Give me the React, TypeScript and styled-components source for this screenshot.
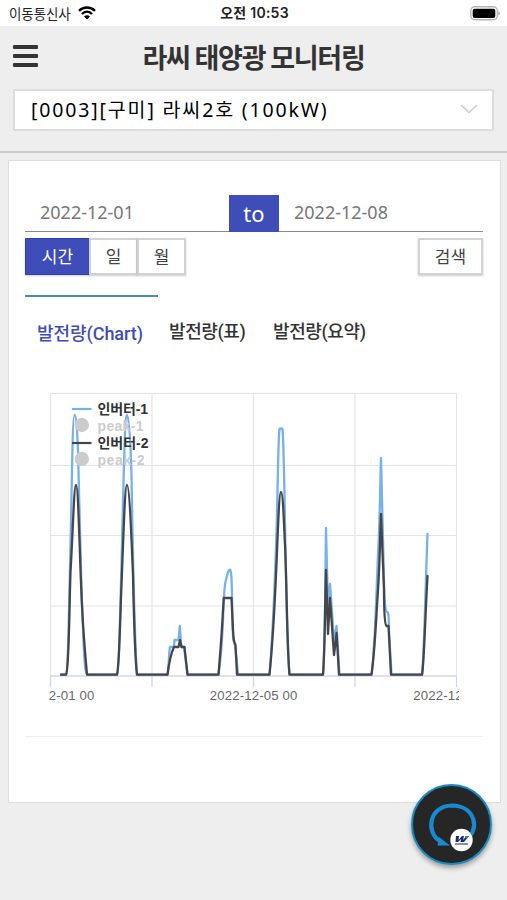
import React from "react";
import styled, { createGlobalStyle } from "styled-components";

const GlobalStyle = createGlobalStyle`
  * { box-sizing: border-box; }
  body { margin: 0; background: #eee; overflow: hidden; }
  button { font: inherit; margin: 0; padding: 0; border: 0; background: none; }
`;

const sans = `"Noto Sans", "Noto Sans CJK KR", sans-serif`;
const kr = `"Noto Sans CJK KR", sans-serif`;

const Screen = styled.div`
  position: relative;
  width: 507px;
  height: 900px;
  background: #eee;
  font-family: ${kr};
  color: #333;
  white-space: nowrap;
`;

const StatusBar = styled.div`
  display: grid;
  grid-template-columns: 1fr auto 1fr;
  align-items: center;
  height: 26px;
  padding: 0 7px 0 9px;
  background: #fff;
  color: #222;
  font-size: 13.5px;
  line-height: 26px;
`;

const Carrier = styled.div`
  display: flex;
  align-items: center;
  gap: 6px;
  letter-spacing: -0.1px;
`;

const CarrierName = styled.span`
  width: 63px;
`;

const Clock = styled.div`
  font-family: Inter, "Noto Sans CJK KR", sans-serif;
  font-weight: 600;
  font-size: 14px;
  letter-spacing: 0.25px;
`;

const Battery = styled.svg`
  justify-self: end;
  display: block;
`;

const Header = styled.header`
  height: 127px;
  border-bottom: 2px solid #ccc;
  padding: 0 13px;
`;

const TitleRow = styled.div`
  display: grid;
  grid-template-columns: 26px 1fr 26px;
  align-items: center;
  height: 63px;
  padding-bottom: 3px;
`;

const MenuButton = styled.button`
  display: grid;
  gap: 5px;
  width: 25px;
`;

const MenuBar = styled.span`
  height: 4px;
  border-radius: 1px;
  background: #333;
`;

const Title = styled.h1`
  margin: 0;
  padding-top: 2px;
  text-align: center;
  font-size: 27px;
  line-height: 36px;
  font-weight: 600;
  letter-spacing: -1.25px;
`;

const SiteSelect = styled.div`
  display: flex;
  align-items: center;
  justify-content: space-between;
  height: 42px;
  padding: 0 14px 3px 16px;
  border: 2px solid #ddd;
  background: #fff;
  color: #000;
  font-family: ${sans};
  font-size: 19.5px;
  letter-spacing: 1.85px;
`;

const Card = styled.main`
  width: 493px;
  height: 643px;
  margin: 7px 0 0 8px;
  padding: 34px 17px 0 16px;
  border: 1px solid #ddd;
  background: #fff;
`;

const DateRow = styled.div`
  display: grid;
  grid-template-columns: 204px 50px 1fr;
  width: 458px;
  height: 37px;
  border-bottom: 1px solid #888;
`;

const DateField = styled.div`
  padding: 0 15px;
  color: #777;
  font-family: ${sans};
  font-size: 18px;
  line-height: 34px;
`;

const DateJoin = styled.div`
  height: 37px;
  background: #3f4db8;
  color: #fff;
  text-align: center;
  font-family: ${sans};
  font-size: 22px;
  line-height: 37px;
`;

const Toolbar = styled.div`
  display: flex;
  justify-content: space-between;
  width: 458px;
  margin-top: 6px;
`;

const ButtonGroup = styled.div`
  display: flex;
`;

const Button = styled.button<{ $width: number; $active?: boolean }>`
  width: ${(p) => p.$width}px;
  height: 37px;
  border: ${(p) => (p.$active ? "1px solid #3440a5" : "2px solid #d2d2d2")};
  background: ${(p) => (p.$active ? "#3f4db8" : "#fff")};
  color: ${(p) => (p.$active ? "#fff" : "#444")};
  box-shadow: 0 1px 2px rgba(0, 0, 0, 0.2);
  padding-bottom: 2px;
  font-size: 17px;
  line-height: 30px;
  & + & { margin-left: -1px; }
`;

const Tabs = styled.nav`
  display: flex;
  margin-top: 20px;
  height: 59px;
`;

const Tab = styled.div<{ $width: number; $active?: boolean }>`
  width: ${(p) => p.$width}px;
  padding: ${(p) => (p.$active ? "25px 0 0 12px" : "25px 0 0 11px")};
  border-top: ${(p) => (p.$active ? "2.5px solid #438fb9" : "0 solid transparent")};
  color: ${(p) => (p.$active ? "#3f4db8" : "#333")};
  font-family: Roboto, "Noto Sans CJK KR", sans-serif;
  font-size: 18px;
  line-height: 24px;
  font-weight: 500;
  letter-spacing: ${(p) => (p.$active ? "-0.05px" : "-0.4px")};
`;

const ChartPanel = styled.section`
  width: 458px;
  height: 383px;
  border-bottom: 1px solid #eee;
  padding: 31px 0 0 24px;
`;

const Chart = styled.svg`
  display: block;
  font-family: "Liberation Sans", "Noto Sans CJK KR", sans-serif;
`;

const FloatingButton = styled.button`
  position: absolute;
  left: 411px;
  top: 784px;
  width: 81px;
  height: 81px;
  border-radius: 50%;
  border: 2px solid #198bc4;
  background: #262626;
  box-shadow: 0 3px 5px rgba(0, 0, 0, 0.35);
`;

const verticals = [50.5, 152, 253.5, 355, 456.5];
const horizontals = [393.5, 465.5, 535.5, 606, 676];

const inverter1 =
  "M61 674.7H66C68 674 69 610 70.5 545C72 480 72.5 415 74.5 415C76 415 77 427 78 450C80 530 81.5 600 83 628C84 655 85 674.7 87 674.7H117C119 674 120.5 600 122 545C124 460 125 415 127 415C129 415 130.5 440 131.5 475C133 560 134 630 137 674.7H167.5C169 665 169 650 170 647H174L174.5 640H178.5L179.8 626L181.3 647H184L187.5 674.7H218.5C222 650 222 638 223 620C224 595 224 585 226 580C228 571 230.5 563 231.5 578C232.5 600 232 630 233.5 641C235 642 236 651 238 674.7H269.5C272 645 274 605 276 548C278 490 278 440 279.5 429Q281 428 282.5 429C284 440 285 535 286 575C287 630 288 655 289.5 674.7H323C325 650 325 600 326 528L328 610L330 584L334 640L336.6 626L339.5 674.7H371.5C375 650 376 600 378 555C380 520 380 490 381 458L384 580Q384.5 612 387 612Q389 611 389 630L391.5 674.7H422C424 660 425 600 427.5 534";
const inverter2 =
  "M61 674.7H66C69 670 69 620 70.5 572C73 530 74 485 76 485C78 485 79 530 81 583C82.5 626 84 640 87 674.7H117C119.5 665 120 620 121.5 585C124 520 125 485 127 485C129 485 131 525 133 575C134 625 135 659 137 674.7H167.5Q170 655 174 647H178.5L180 640L181.5 647H184.5L187.5 674.7H218.5C220 655 221.5 640 223 610L223.8 598H231.5L233 630Q233.5 642 235.5 645L237 674.7H269.5C272 650 274 620 276 575C278 530 279 492 281 492C283 492 284 525 285 545C287 590 287 650 289.5 674.7H323C325 650 325 600 326 570L328 634L330 598L334 655L336.6 633L339 674.7H371.5C375 650 376 620 378 590C380 560 380 535 381 514L384 590Q384 624 386.5 626H388.5L391 674.7H422C424 665 425 620 427.5 576";

const App = () => (
  <Screen>
    <GlobalStyle />
    <StatusBar>
      <Carrier>
        <CarrierName>이동통신사</CarrierName>
        <svg width="18" height="14" viewBox="0 0 18 14">
          <g fill="none" stroke="#000" strokeWidth="2.4">
            <path d="M1 4.8C5.5 .4 12.5 .4 17 4.8" />
            <path d="M4 8C7 5 11 5 14 8" />
          </g>
          <path d="M9 13.5L6 10.5Q9 8 12 10.5Z" />
        </svg>
      </Carrier>
      <Clock>오전 10:53</Clock>
      <Battery width="30" height="15" viewBox="0 0 30 15">
        <rect x="0.8" y="0.8" width="26.5" height="13" rx="4" fill="#fff" stroke="#b5b5b5" strokeWidth="1.4" />
        <rect x="2.7" y="2.7" width="22.6" height="9.3" rx="2" />
        <path d="M28.4 5.2Q30 5.5 30 7.2T28.4 9.5Z" fill="#aaa" />
      </Battery>
    </StatusBar>

    <Header>
      <TitleRow>
        <MenuButton aria-label="메뉴">
          <MenuBar />
          <MenuBar />
          <MenuBar />
        </MenuButton>
        <Title>라씨 태양광 모니터링</Title>
      </TitleRow>
      <SiteSelect>
        <span>[0003][구미] 라씨2호 (100kW)</span>
        <svg width="18" height="10" viewBox="0 0 18 10" fill="none" stroke="#ccc" strokeWidth="1.6">
          <path d="M1 1L9 8.5L17 1" />
        </svg>
      </SiteSelect>
    </Header>

    <Card>
      <DateRow>
        <DateField>2022-12-01</DateField>
        <DateJoin>to</DateJoin>
        <DateField>2022-12-08</DateField>
      </DateRow>
      <Toolbar>
        <ButtonGroup>
          <Button $width={65} $active>시간</Button>
          <Button $width={49}>일</Button>
          <Button $width={49}>월</Button>
        </ButtonGroup>
        <Button $width={65}>검색</Button>
      </Toolbar>
      <Tabs>
        <Tab $width={133} $active>발전량(Chart)</Tab>
        <Tab $width={104}>발전량(표)</Tab>
        <Tab $width={120}>발전량(요약)</Tab>
      </Tabs>
      <ChartPanel>
        <Chart width="410" height="324" viewBox="49 385 410 324">
          <g stroke="#e4e4e6" strokeWidth="1.2">
            {horizontals.map((y) => <path key={y} d={`M50 ${y}H457`} />)}
            {verticals.map((x) => <path key={x} d={`M${x} 393V676`} />)}
          </g>
          <g stroke="#ccd3ea" strokeWidth="1.2">
            <path d="M50 676H457" />
            {verticals.map((x) => <path key={x} d={`M${x} 676V687`} />)}
          </g>
          <g fill="none" strokeWidth="2.3" strokeLinejoin="round" strokeLinecap="round">
            <path stroke="#76b2e9" d={inverter1} />
            <path stroke="#45464c" d={inverter2} />
          </g>
          <g strokeWidth="2.2">
            <path stroke="#76b2e9" d="M72 409H91.5" />
            <path stroke="#45464c" d="M72 443H91.5" />
          </g>
          <g fill="#ccc">
            <circle cx="81.8" cy="425" r="7.2" />
            <circle cx="81.8" cy="459" r="7.2" />
          </g>
          <g fontSize="14" fontWeight="700">
            <text x="97.5" y="413.5" fill="#333" textLength="50.5">인버터-1</text>
            <text x="97.5" y="431" fill="#ccc" textLength="46">peak-1</text>
            <text x="97.5" y="447.5" fill="#333" textLength="51">인버터-2</text>
            <text x="97.5" y="465" fill="#ccc" textLength="47">peak-2</text>
          </g>
          <g fontSize="13.2" fill="#666" textAnchor="middle">
            <text x="50.5" y="700" textLength="87.5">2022-12-01 00</text>
            <text x="253.5" y="700" textLength="87.5">2022-12-05 00</text>
            <text x="457" y="700" textLength="87.5">2022-12-09 00</text>
          </g>
        </Chart>
      </ChartPanel>
    </Card>

    <FloatingButton aria-label="새로고침">
      <svg width="77" height="77" viewBox="413 786 77 77">
        <path d="M440 841C426 833 428 806 452 805.5C476 806 480 830 466 840" fill="none" stroke="#168bd0" strokeWidth="4.2" />
        <path d="M439 837L450 845.5H437.5Z" fill="#168bd0" />
        <circle cx="461.5" cy="840" r="11.2" fill="#fff" />
        <path d="M456 836H459L458.5 840L462 836H464L463 840L466.5 836H469L464 842H460.5L461 839L458 842H455.5Z" fill="#182a72" />
        <path d="M464.5 836H469L466.5 838.5Z" fill="#238cc0" />
        <path d="M455 844H468" stroke="#38446b" strokeWidth="1.2" />
      </svg>
    </FloatingButton>
  </Screen>
);

export default App;
